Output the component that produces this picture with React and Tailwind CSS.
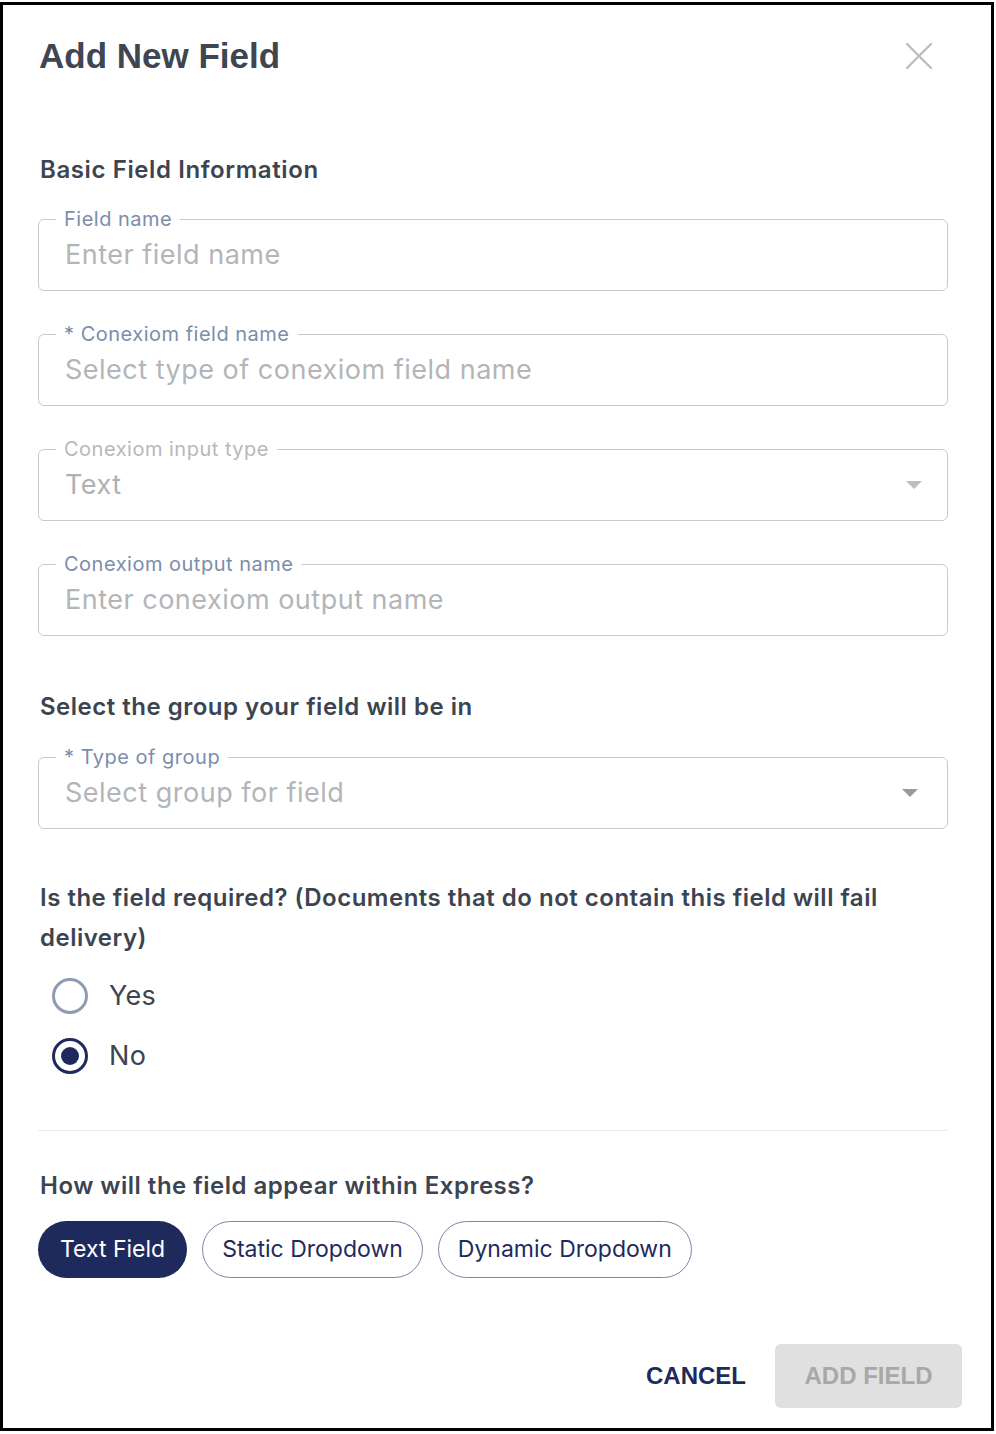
import React from "react";

function Field({ label, labelColor = "text-[#7b8dab]", value, valueColor = "text-[#b3b5b9]", arrow, arrowColor, arrowMr }) {
  return (
    <fieldset className="m-0 p-0 min-w-0 border border-[#cacaca] rounded-[6px]">
      <legend className={`ml-[17px] px-2 text-[20px] leading-[24px] tracking-[0.5px] ${labelColor}`}>{label}</legend>
      <div className="h-[59px] pl-[26px] pt-2 flex items-start justify-between">
        <span className={`text-[27px] leading-[32px] tracking-[0.5px] ${valueColor}`}>{value}</span>
        {arrow && (
          <svg width="16" height="8" viewBox="0 0 16 8" className={`mt-[12px] ${arrowMr}`}>
            <path d="M0 0 L16 0 L8 8 Z" fill={arrowColor} />
          </svg>
        )}
      </div>
    </fieldset>
  );
}

function Radio({ label, checked }) {
  return (
    <div className="h-[60px] flex items-center">
      <div
        className={`ml-[14px] w-[36px] h-[36px] rounded-full flex items-center justify-center ${
          checked ? "border-[3.5px] border-[#1f2a5c]" : "border-[3px] border-[#8d9cb3]"
        }`}
      >
        {checked && <div className="w-[18px] h-[18px] rounded-full bg-[#1f2a5c]" />}
      </div>
      <span className="ml-[21px] text-[27px] leading-[32px] tracking-[0.3px] text-[#3c4450]">{label}</span>
    </div>
  );
}

export default function App() {
  return (
    <div className="w-[996px] h-[1434px] bg-white pt-[2px] font-['Inter',sans-serif]">
      <div className="w-[994px] h-[1429px] border-[3px] border-black bg-white flex flex-col pl-[35px] pr-[43px]">
        <div className="mt-[31px] flex items-center justify-between">
          <h1 className="ml-[1px] text-[35px] leading-[40px] font-bold text-[#3f4651] font-['Liberation_Sans',Arial,sans-serif]">
            Add New Field
          </h1>
          <svg width="28" height="28" viewBox="0 0 28 28" className="mr-[15px]">
            <path d="M2 2 L26 26 M26 2 L2 26" stroke="#bcbcbc" strokeWidth="2.3" strokeLinecap="round" />
          </svg>
        </div>

        <h2 className="mt-[80px] ml-[2px] text-[24px] leading-[28px] font-semibold tracking-[0.6px] text-[#3d4451]">
          Basic Field Information
        </h2>

        <div className="mt-[23px] flex flex-col gap-[31px]">
          <Field label="Field name" value="Enter field name" />
          <Field label="* Conexiom field name" value="Select type of conexiom field name" />
          <Field
            label="Conexiom input type"
            labelColor="text-[#b8b8b8]"
            value="Text"
            valueColor="text-[#b0b0b0]"
            arrow
            arrowColor="#bdbdbd"
            arrowMr="mr-[25px]"
          />
          <Field label="Conexiom output name" value="Enter conexiom output name" />
        </div>

        <h2 className="mt-[57px] ml-[2px] text-[24px] leading-[28px] font-semibold tracking-[0.5px] text-[#3d4451]">
          Select the group your field will be in
        </h2>

        <div className="mt-[24px]">
          <Field
            label="* Type of group"
            value="Select group for field"
            arrow
            arrowColor="#9a9a9a"
            arrowMr="mr-[29px]"
          />
        </div>

        <p className="mt-[49px] ml-[2px] text-[24px] leading-[40px] font-semibold tracking-[0.5px] text-[#3d4451]">
          Is the field required? (Documents that do not contain this field will fail delivery)
        </p>

        <div className="mt-[8px] flex flex-col">
          <Radio label="Yes" />
          <Radio label="No" checked />
        </div>

        <div className="mt-[44px] h-px bg-[#e8ebf0]" />

        <h2 className="mt-[41px] ml-[2px] text-[24px] leading-[28px] font-semibold tracking-[0.5px] text-[#3d4451]">
          How will the field appear within Express?
        </h2>

        <div className="mt-[21px] flex gap-[15px]">
          <button className="h-[57px] px-[22px] rounded-full bg-[#1f2a5c] text-white text-[23px]">Text Field</button>
          <button className="h-[57px] px-[19px] rounded-full border border-[#7c86a6] text-[#1f2a5c] text-[23px]">
            Static Dropdown
          </button>
          <button className="h-[57px] px-[19px] rounded-full border border-[#7c86a6] text-[#1f2a5c] text-[23px]">
            Dynamic Dropdown
          </button>
        </div>

        <div className="mt-[66px] -mr-[14px] flex justify-end items-center font-['Liberation_Sans',Arial,sans-serif]">
          <button className="h-[64px] px-[16px] text-[24px] font-bold text-[#1f2a5c]">CANCEL</button>
          <button className="ml-[13px] h-[64px] w-[187px] rounded-[6px] bg-[#e0e0e0] text-[24px] font-bold text-[#a8a8a8]">
            ADD FIELD
          </button>
        </div>
      </div>
    </div>
  );
}
